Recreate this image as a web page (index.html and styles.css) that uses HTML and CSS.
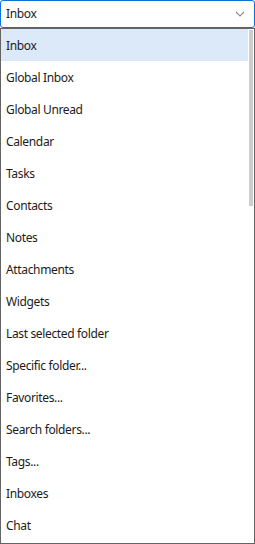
FILE: index.html
```html
<!DOCTYPE html>
<html lang="en">
<head>
  <meta charset="UTF-8" />
  <meta name="viewport" content="width=device-width, initial-scale=1" />
  <title>Folder picker</title>
  <link rel="stylesheet" href="styles.css">
</head>
<body>

<!-- Select -->
<div class="select">
  <span class="selectValue">Inbox</span>
  <svg class="chevron" width="10" height="6" viewBox="0 0 10 6">
    <path d="M1 1 L5 5 L9 1" fill="none" stroke="#8a8a8a" stroke-width="1.1" />
  </svg>
</div>

<!-- Dropdown list -->
<div class="list">
  <div class="item selected">Inbox</div>
  <div class="item">Global Inbox</div>
  <div class="item">Global Unread</div>
  <div class="item">Calendar</div>
  <div class="item">Tasks</div>
  <div class="item">Contacts</div>
  <div class="item">Notes</div>
  <div class="item">Attachments</div>
  <div class="item">Widgets</div>
  <div class="item">Last selected folder</div>
  <div class="item">Specific folder...</div>
  <div class="item">Favorites...</div>
  <div class="item">Search folders...</div>
  <div class="item">Tags...</div>
  <div class="item">Inboxes</div>
  <div class="item">Chat</div>
  <div class="scrollThumb"></div>
</div>

</body>
</html>
```

FILE: styles.css
```css
* { margin: 0; padding: 0; box-sizing: border-box; }
body {
  font-family: "Noto Sans", "Open Sans", sans-serif;
  font-size: 12px;
  letter-spacing: -0.35px;
  color: #1b1b1b;
  background: #fff;
  width: 255px;
  height: 544px;
  overflow: hidden;
}

/* Select */
.select {
  height: 28px;
  border: 1px solid #0a74da;
  border-radius: 3px;
  display: flex;
  align-items: center;
  justify-content: space-between;
  padding: 0 9px 0 5px;
}

.selectValue {
  line-height: 16px;
}

.chevron {
  display: block;
}

/* List */
.list {
  position: relative;
  height: 516px;
  border: 1px solid #646464;
  padding-right: 6px;
}

.item {
  height: 32px;
  display: flex;
  align-items: center;
  padding-left: 5px;
}

.item.selected {
  background: #dce9f9;
}

.scrollThumb {
  position: absolute;
  top: 1px;
  right: 1px;
  width: 4px;
  height: 176px;
  background: #cdcdcd;
}
```
